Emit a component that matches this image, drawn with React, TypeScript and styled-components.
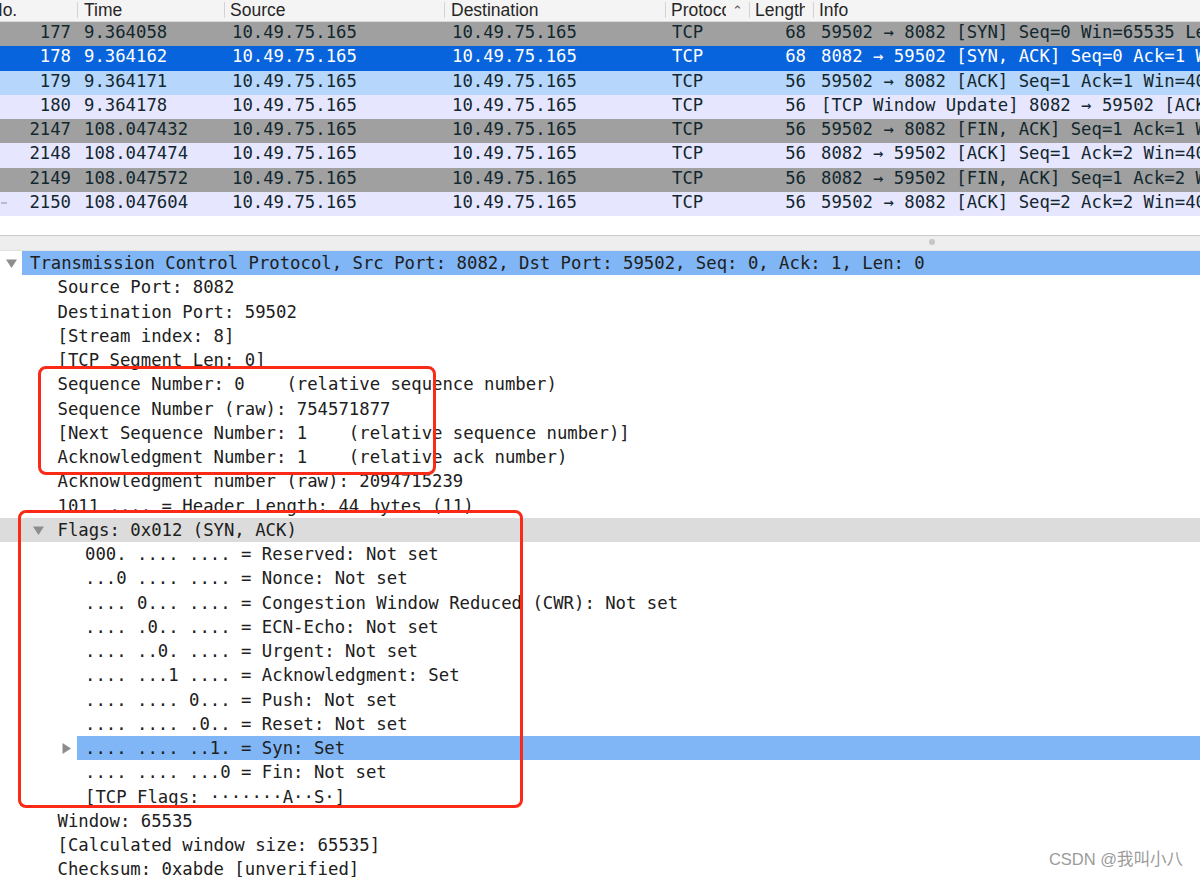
import React from 'react';
import styled, { createGlobalStyle, css } from 'styled-components';

const GlobalStyle = createGlobalStyle`
  html, body {
    margin: 0;
    padding: 0;
    background: #ffffff;
    overflow: hidden;
  }
  #root {
    width: 1200px;
    height: 877px;
  }
`;

type RowKind = 'syn' | 'selected' | 'related' | 'plain';

interface Packet {
  no: number;
  time: string;
  len: number;
  info: string;
  kind: RowKind;
  mark?: 'first' | 'last';
}

const HOST = '10.49.75.165';

const packets: Packet[] = [
  { no: 177, time: '9.364058', len: 68, kind: 'syn', mark: 'first', info: '59502 → 8082 [SYN] Seq=0 Win=65535 Len=0 MSS=1460 WS=64 TSval=1 TSecr=0 SACK_PERM=1' },
  { no: 178, time: '9.364162', len: 68, kind: 'selected', info: '8082 → 59502 [SYN, ACK] Seq=0 Ack=1 Win=65535 Len=0 MSS=1460 WS=64' },
  { no: 179, time: '9.364171', len: 56, kind: 'related', info: '59502 → 8082 [ACK] Seq=1 Ack=1 Win=408256 Len=0 TSval=1 TSecr=1' },
  { no: 180, time: '9.364178', len: 56, kind: 'plain', info: '[TCP Window Update] 8082 → 59502 [ACK] Seq=1 Ack=1 Win=408256 Len=0' },
  { no: 2147, time: '108.047432', len: 56, kind: 'syn', info: '59502 → 8082 [FIN, ACK] Seq=1 Ack=1 Win=408256 Len=0 TSval=2' },
  { no: 2148, time: '108.047474', len: 56, kind: 'plain', info: '8082 → 59502 [ACK] Seq=1 Ack=2 Win=408256 Len=0 TSval=2' },
  { no: 2149, time: '108.047572', len: 56, kind: 'syn', info: '8082 → 59502 [FIN, ACK] Seq=1 Ack=2 Win=408256 Len=0 TSval=2' },
  { no: 2150, time: '108.047604', len: 56, kind: 'plain', mark: 'last', info: '59502 → 8082 [ACK] Seq=2 Ack=2 Win=408256 Len=0 TSval=2' },
];

interface TreeItem {
  text: string;
  level: number;
  toggle?: 'open' | 'closed';
  selected?: boolean;
  band?: boolean;
}

const tree: TreeItem[] = [
  { text: 'Transmission Control Protocol, Src Port: 8082, Dst Port: 59502, Seq: 0, Ack: 1, Len: 0', level: 0, toggle: 'open', selected: true },
  { text: 'Source Port: 8082', level: 1 },
  { text: 'Destination Port: 59502', level: 1 },
  { text: '[Stream index: 8]', level: 1 },
  { text: '[TCP Segment Len: 0]', level: 1 },
  { text: 'Sequence Number: 0    (relative sequence number)', level: 1 },
  { text: 'Sequence Number (raw): 754571877', level: 1 },
  { text: '[Next Sequence Number: 1    (relative sequence number)]', level: 1 },
  { text: 'Acknowledgment Number: 1    (relative ack number)', level: 1 },
  { text: 'Acknowledgment number (raw): 2094715239', level: 1 },
  { text: '1011 .... = Header Length: 44 bytes (11)', level: 1 },
  { text: 'Flags: 0x012 (SYN, ACK)', level: 1, toggle: 'open', band: true },
  { text: '000. .... .... = Reserved: Not set', level: 2 },
  { text: '...0 .... .... = Nonce: Not set', level: 2 },
  { text: '.... 0... .... = Congestion Window Reduced (CWR): Not set', level: 2 },
  { text: '.... .0.. .... = ECN-Echo: Not set', level: 2 },
  { text: '.... ..0. .... = Urgent: Not set', level: 2 },
  { text: '.... ...1 .... = Acknowledgment: Set', level: 2 },
  { text: '.... .... 0... = Push: Not set', level: 2 },
  { text: '.... .... .0.. = Reset: Not set', level: 2 },
  { text: '.... .... ..1. = Syn: Set', level: 2, toggle: 'closed', selected: true },
  { text: '.... .... ...0 = Fin: Not set', level: 2 },
  { text: '[TCP Flags: ·······A··S·]', level: 2 },
  { text: 'Window: 65535', level: 1 },
  { text: '[Calculated window size: 65535]', level: 1 },
  { text: 'Checksum: 0xabde [unverified]', level: 1 },
];

const COLUMNS = '77px 147px 220px 221px 84px 64px 1fr';
const ROW_H = '24.25px';
const MONO = `'DejaVu Sans Mono', 'Liberation Mono', monospace`;

const App = () => (
  <>
    <GlobalStyle />
    <Window>
      <PacketList>
        <ListHeader>
          <HeadCell $indent={0}><NoLabel>No.</NoLabel></HeadCell>
          <HeadCell $divider>Time</HeadCell>
          <HeadCell $divider $indent={6}>Source</HeadCell>
          <HeadCell $divider>Destination</HeadCell>
          <HeadCell $divider $indent={6}>
            <Clip $w={55}>Protocol</Clip>
            <SortCaret>⌃</SortCaret>
          </HeadCell>
          <HeadCell $divider $indent={6}><Clip $w={50}>Length</Clip></HeadCell>
          <HeadCell $divider $indent={6}>Info</HeadCell>
        </ListHeader>
        {packets.map((p) => (
          <PacketRow key={p.no} $kind={p.kind}>
            <NoCell>
              <Mark>{p.mark && <RelatedMark kind={p.mark} />}</Mark>
              {p.no}
            </NoCell>
            <Cell>{p.time}</Cell>
            <Cell $pad={8}>{HOST}</Cell>
            <Cell $pad={8}>{HOST}</Cell>
            <Cell>TCP</Cell>
            <Cell $right>{p.len}</Cell>
            <Cell $pad={8}>{p.info}</Cell>
          </PacketRow>
        ))}
      </PacketList>

      <Splitter>
        <Grip />
      </Splitter>

      <DetailTree>
        {tree.map((t, i) => (
          <TreeRow key={i} $band={t.band}>
            <Toggle $level={t.level}>
              {t.toggle && <Disclosure open={t.toggle === 'open'} />}
            </Toggle>
            <TreeLabel $selected={t.selected}>{t.text}</TreeLabel>
          </TreeRow>
        ))}
      </DetailTree>

      <Annotation $left={38} $top={366} $w={398} $h={109} />
      <Annotation $left={18} $top={510} $w={505} $h={298} />
      <Watermark>CSDN @我叫小八</Watermark>
    </Window>
  </>
);

const Disclosure = ({ open }: { open: boolean }) => (
  <svg width="11" height="11" viewBox="0 0 11 11">
    {open
      ? <polygon points="0,1.5 11,1.5 5.5,10" fill="#8d8d8d" />
      : <polygon points="1.5,0 10,5.5 1.5,11" fill="#8d8d8d" />}
  </svg>
);

const RelatedMark = ({ kind }: { kind: 'first' | 'last' }) => (
  <svg width="9" height="24" viewBox="0 0 9 24">
    {kind === 'first'
      ? <path d="M2 8 L8 5 M2 10 L8 13 M2 12 L8 12" stroke="#9aa0a3" strokeWidth="1" fill="none" />
      : <path d="M1 12 L7 12" stroke="#9aa0a3" strokeWidth="1.2" fill="none" />}
  </svg>
);

export default App;

// Window
const Window = styled.div`
  position: relative;
  width: 1200px;
  height: 877px;
  overflow: hidden;
  background: #fff;
`;

// Packet list
const PacketList = styled.div`
  height: 235px;
  overflow: hidden;
  background: #fff;
`;

const ListHeader = styled.div`
  display: grid;
  grid-template-columns: ${COLUMNS};
  height: 22px;
  box-sizing: border-box;
  background: #f4f4f4;
  border-bottom: 1px solid #d9d9d9;
  font-family: 'Liberation Sans', Arial, sans-serif;
  font-size: 17.5px;
  line-height: 20px;
  color: #262626;
`;

const HeadCell = styled.div<{ $divider?: boolean; $indent?: number }>`
  position: relative;
  display: flex;
  align-items: flex-start;
  overflow: hidden;
  white-space: nowrap;
  padding-left: ${(p) => (p.$indent ?? 7)}px;
  ${(p) => p.$divider && css`
    &::before {
      content: '';
      position: absolute;
      left: 0;
      top: 2px;
      bottom: 3px;
      width: 1px;
      background: #d3d3d3;
    }
  `}
`;

const NoLabel = styled.span`
  margin-left: -10px;
`;

const Clip = styled.span<{ $w: number }>`
  display: inline-block;
  width: ${(p) => p.$w}px;
  overflow: hidden;
  flex: none;
`;

const SortCaret = styled.span`
  margin-left: 6px;
  font-size: 13px;
  line-height: 22px;
  color: #555;
`;

const rowColors: Record<RowKind, ReturnType<typeof css>> = {
  syn: css`background: #a0a0a0; color: #12272e;`,
  selected: css`background: #0864dc; color: #ffffff;`,
  related: css`background: #b6d6fb; color: #12272e;`,
  plain: css`background: #e7e6ff; color: #12272e;`,
};

const PacketRow = styled.div<{ $kind: RowKind }>`
  display: grid;
  grid-template-columns: ${COLUMNS};
  height: ${ROW_H};
  font-family: ${MONO};
  font-size: 17.3px;
  line-height: 21px;
  ${(p) => rowColors[p.$kind]};
`;

const Cell = styled.div<{ $pad?: number; $right?: boolean }>`
  overflow: hidden;
  white-space: pre;
  padding-left: ${(p) => (p.$right ? 0 : p.$pad ?? 7)}px;
  padding-right: ${(p) => (p.$right ? 7 : 0)}px;
  text-align: ${(p) => (p.$right ? 'right' : 'left')};
`;

const NoCell = styled.div`
  display: flex;
  justify-content: space-between;
  padding-right: 6px;
  overflow: hidden;
`;

const Mark = styled.span`
  display: flex;
  width: 9px;
  height: ${ROW_H};
  margin-top: -1px;
`;

// Splitter
const Splitter = styled.div`
  display: flex;
  justify-content: center;
  align-items: center;
  height: 16px;
  box-sizing: border-box;
  padding-left: 664px;
  background: #eeeeee;
  border-top: 1px solid #c9c9c9;
  border-bottom: 1px solid #e2e2e2;
`;

const Grip = styled.span`
  width: 6px;
  height: 6px;
  border-radius: 50%;
  background: #c6c6c6;
  margin-top: -3px;
`;

// Detail tree
const DetailTree = styled.div`
  font-family: ${MONO};
  font-size: 17.3px;
  line-height: 25px;
  color: #202020;
`;

const TreeRow = styled.div<{ $band?: boolean }>`
  display: flex;
  height: ${ROW_H};
  background: ${(p) => (p.$band ? '#dcdcdc' : 'transparent')};
`;

const Toggle = styled.div<{ $level: number }>`
  flex: none;
  display: flex;
  align-items: center;
  justify-content: center;
  width: 22px;
  margin-left: ${(p) => p.$level * 27.5}px;
  padding-top: 1px;
  box-sizing: border-box;
`;

const TreeLabel = styled.div<{ $selected?: boolean }>`
  flex: 1;
  padding-left: 8px;
  white-space: pre;
  overflow: hidden;
  background: ${(p) => (p.$selected ? '#80b6f5' : 'transparent')};
`;

// Overlays
const Annotation = styled.div<{ $left: number; $top: number; $w: number; $h: number }>`
  position: absolute;
  left: ${(p) => p.$left}px;
  top: ${(p) => p.$top}px;
  width: ${(p) => p.$w}px;
  height: ${(p) => p.$h}px;
  box-sizing: border-box;
  border: 3px solid #fb2a16;
  border-radius: 8px;
  pointer-events: none;
`;

const Watermark = styled.div`
  position: absolute;
  right: 17px;
  bottom: 8px;
  font-family: 'Liberation Sans', 'Noto Sans CJK SC', sans-serif;
  font-size: 16.5px;
  line-height: 20px;
  color: #9b9b9b;
  text-shadow: 0 0 1px #ffffff;
`;
